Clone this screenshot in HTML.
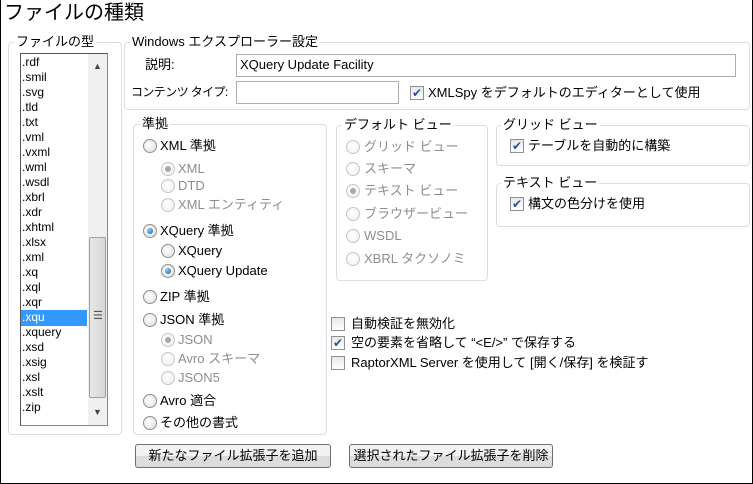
<!DOCTYPE html>
<html><head><meta charset="utf-8"><style>
*{margin:0;padding:0;box-sizing:border-box}
body{width:753px;height:484px;background:#fff;font-family:"Liberation Sans","Noto Sans CJK JP",sans-serif;font-size:13px;color:#000;position:relative;overflow:hidden}
#frame{position:absolute;left:0;top:0;width:753px;height:484px;border:1px solid #000;border-top:none}
.a{position:absolute;white-space:nowrap;line-height:16px}
.g{position:absolute;border:1px solid #d5dfe5;border-radius:4px}
.lg{position:absolute;background:#fff;padding:0 2px;line-height:14px;white-space:nowrap}
.r{position:absolute;width:14px;height:14px;border-radius:50%;border:1px solid #8e8f8f;background:radial-gradient(circle at 40% 40%,#fff,#dcdcdc)}
.r.d{border-color:#c5c5c5;background:radial-gradient(circle at 40% 40%,#fff,#eee)}
.r.on::after{content:"";position:absolute;left:3px;top:3px;width:6px;height:6px;border-radius:50%;background:radial-gradient(circle at 35% 35%,#8fd0ff,#0a5aa8)}
.r.don::after{content:"";position:absolute;left:3px;top:3px;width:6px;height:6px;border-radius:50%;background:#a8a8a8}
.gr{color:#8d8d8d}
.c{position:absolute;width:14px;height:14px;border:1px solid #8e8f8f;background:linear-gradient(#e8e8e8,#fff)}
.c.on::after{content:"✔";position:absolute;left:1px;top:-2px;font-size:12px;color:#2a4fa0;line-height:16px}
.in{position:absolute;border:1px solid #abadb3;background:#fff}
.btn{position:absolute;border:1px solid #707070;border-radius:3px;background:linear-gradient(#f2f2f2 50%,#dcdcdc 50%);text-align:center;line-height:21px}
</style></head><body>
<div id="frame"></div>
<div class="a" style="left:4px;top:1px;font-size:20px;line-height:24px">ファイルの種類</div>

<div class="g" style="left:8px;top:42px;width:114px;height:393px"></div>
<div class="lg" style="left:14px;top:35px">ファイルの型</div>
<div style="position:absolute;left:20px;top:53px;width:88px;height:373px;border:1px solid #828790;border-left-color:#555;border-top-color:#555;background:#fff"></div>
<div style="position:absolute;left:88px;top:54px;width:19px;height:371px;background:#f0f0f0"></div>
<div style="position:absolute;left:89px;top:237px;width:17px;height:161px;background:linear-gradient(90deg,#e8e8e8,#d6d6d6);border:1px solid #a0a0a0;border-radius:2px"></div>
<div class="a" style="left:93px;top:308px;font-size:11px;color:#555">☰</div>
<div class="a" style="left:93px;top:58px;font-size:9px;color:#444">▲</div>
<div class="a" style="left:93px;top:404px;font-size:9px;color:#444">▼</div>
<div style="position:absolute;left:21px;top:310px;width:66px;height:16px;background:#3399ff"></div>
<div style="position:absolute;left:22px;top:55px;line-height:15px;font-size:12px">
<div>.rdf</div><div>.smil</div><div>.svg</div><div>.tld</div><div>.txt</div><div>.vml</div><div>.vxml</div><div>.wml</div><div>.wsdl</div><div>.xbrl</div><div>.xdr</div><div>.xhtml</div><div>.xlsx</div><div>.xml</div><div>.xq</div><div>.xql</div><div>.xqr</div><div style="color:#fff">.xqu</div><div>.xquery</div><div>.xsd</div><div>.xsig</div><div>.xsl</div><div>.xslt</div><div>.zip</div>
</div>

<div class="g" style="left:124px;top:42px;width:626px;height:68px"></div>
<div class="lg" style="left:130px;top:35px">Windows エクスプローラー設定</div>
<div class="a" style="left:145px;top:57px">説明:</div>
<div class="in" style="left:236px;top:54px;width:500px;height:23px"></div>
<div class="a" style="left:240px;top:57px">XQuery Update Facility</div>
<div class="a" style="left:131px;top:84px;font-size:12px;letter-spacing:-0.6px">コンテンツ タイプ:</div>
<div class="in" style="left:236px;top:81px;width:163px;height:23px"></div>
<div class="c on" style="left:410px;top:86px"></div>
<div class="a" style="left:428px;top:85px">XMLSpy をデフォルトのエディターとして使用</div>

<div class="g" style="left:133px;top:124px;width:194px;height:311px"></div>
<div class="lg" style="left:140px;top:117px">準拠</div>
<div class="r" style="left:143px;top:139px"></div><div class="a" style="left:160px;top:138px">XML 準拠</div>
<div class="r d don" style="left:161px;top:162px"></div><div class="a gr" style="left:178px;top:161px">XML</div>
<div class="r d" style="left:161px;top:179px"></div><div class="a gr" style="left:178px;top:178px">DTD</div>
<div class="r d" style="left:161px;top:198px"></div><div class="a gr" style="left:178px;top:197px">XML エンティティ</div>
<div class="r on" style="left:143px;top:224px"></div><div class="a" style="left:160px;top:223px">XQuery 準拠</div>
<div class="r" style="left:161px;top:244px"></div><div class="a" style="left:178px;top:243px">XQuery</div>
<div class="r on" style="left:161px;top:264px"></div><div class="a" style="left:178px;top:263px">XQuery Update</div>
<div class="r" style="left:143px;top:290px"></div><div class="a" style="left:160px;top:289px">ZIP 準拠</div>
<div class="r" style="left:143px;top:313px"></div><div class="a" style="left:160px;top:312px">JSON 準拠</div>
<div class="r d don" style="left:161px;top:333px"></div><div class="a gr" style="left:178px;top:332px">JSON</div>
<div class="r d" style="left:161px;top:352px"></div><div class="a gr" style="left:178px;top:351px">Avro スキーマ</div>
<div class="r d" style="left:161px;top:371px"></div><div class="a gr" style="left:178px;top:370px">JSON5</div>
<div class="r" style="left:143px;top:394px"></div><div class="a" style="left:160px;top:393px">Avro 適合</div>
<div class="r" style="left:143px;top:416px"></div><div class="a" style="left:160px;top:415px">その他の書式</div>

<div class="g" style="left:336px;top:125px;width:152px;height:156px"></div>
<div class="lg" style="left:342px;top:118px">デフォルト ビュー</div>
<div class="r d" style="left:346px;top:140px"></div><div class="a gr" style="left:364px;top:139px">グリッド ビュー</div>
<div class="r d" style="left:346px;top:162px"></div><div class="a gr" style="left:364px;top:161px">スキーマ</div>
<div class="r d don" style="left:346px;top:184px"></div><div class="a gr" style="left:364px;top:183px">テキスト ビュー</div>
<div class="r d" style="left:346px;top:207px"></div><div class="a gr" style="left:364px;top:206px">ブラウザービュー</div>
<div class="r d" style="left:346px;top:229px"></div><div class="a gr" style="left:364px;top:228px">WSDL</div>
<div class="r d" style="left:346px;top:252px"></div><div class="a gr" style="left:364px;top:251px">XBRL タクソノミ</div>

<div class="g" style="left:496px;top:125px;width:254px;height:41px"></div>
<div class="lg" style="left:501px;top:118px">グリッド ビュー</div>
<div class="c on" style="left:510px;top:139px"></div><div class="a" style="left:528px;top:138px">テーブルを自動的に構築</div>
<div class="g" style="left:496px;top:183px;width:254px;height:44px"></div>
<div class="lg" style="left:501px;top:176px">テキスト ビュー</div>
<div class="c on" style="left:510px;top:197px"></div><div class="a" style="left:528px;top:196px">構文の色分けを使用</div>

<div class="c" style="left:331px;top:317px"></div><div class="a" style="left:351px;top:316px">自動検証を無効化</div>
<div class="c on" style="left:331px;top:336px"></div><div class="a" style="left:351px;top:335px">空の要素を省略して “&lt;E/&gt;” で保存する</div>
<div class="c" style="left:331px;top:356px"></div><div class="a" style="left:351px;top:355px">RaptorXML Server を使用して [開く/保存] を検証す</div>

<div class="btn" style="left:135px;top:444px;width:196px;height:24px">新たなファイル拡張子を追加</div>
<div class="btn" style="left:349px;top:444px;width:204px;height:24px">選択されたファイル拡張子を削除</div>
</body></html>
